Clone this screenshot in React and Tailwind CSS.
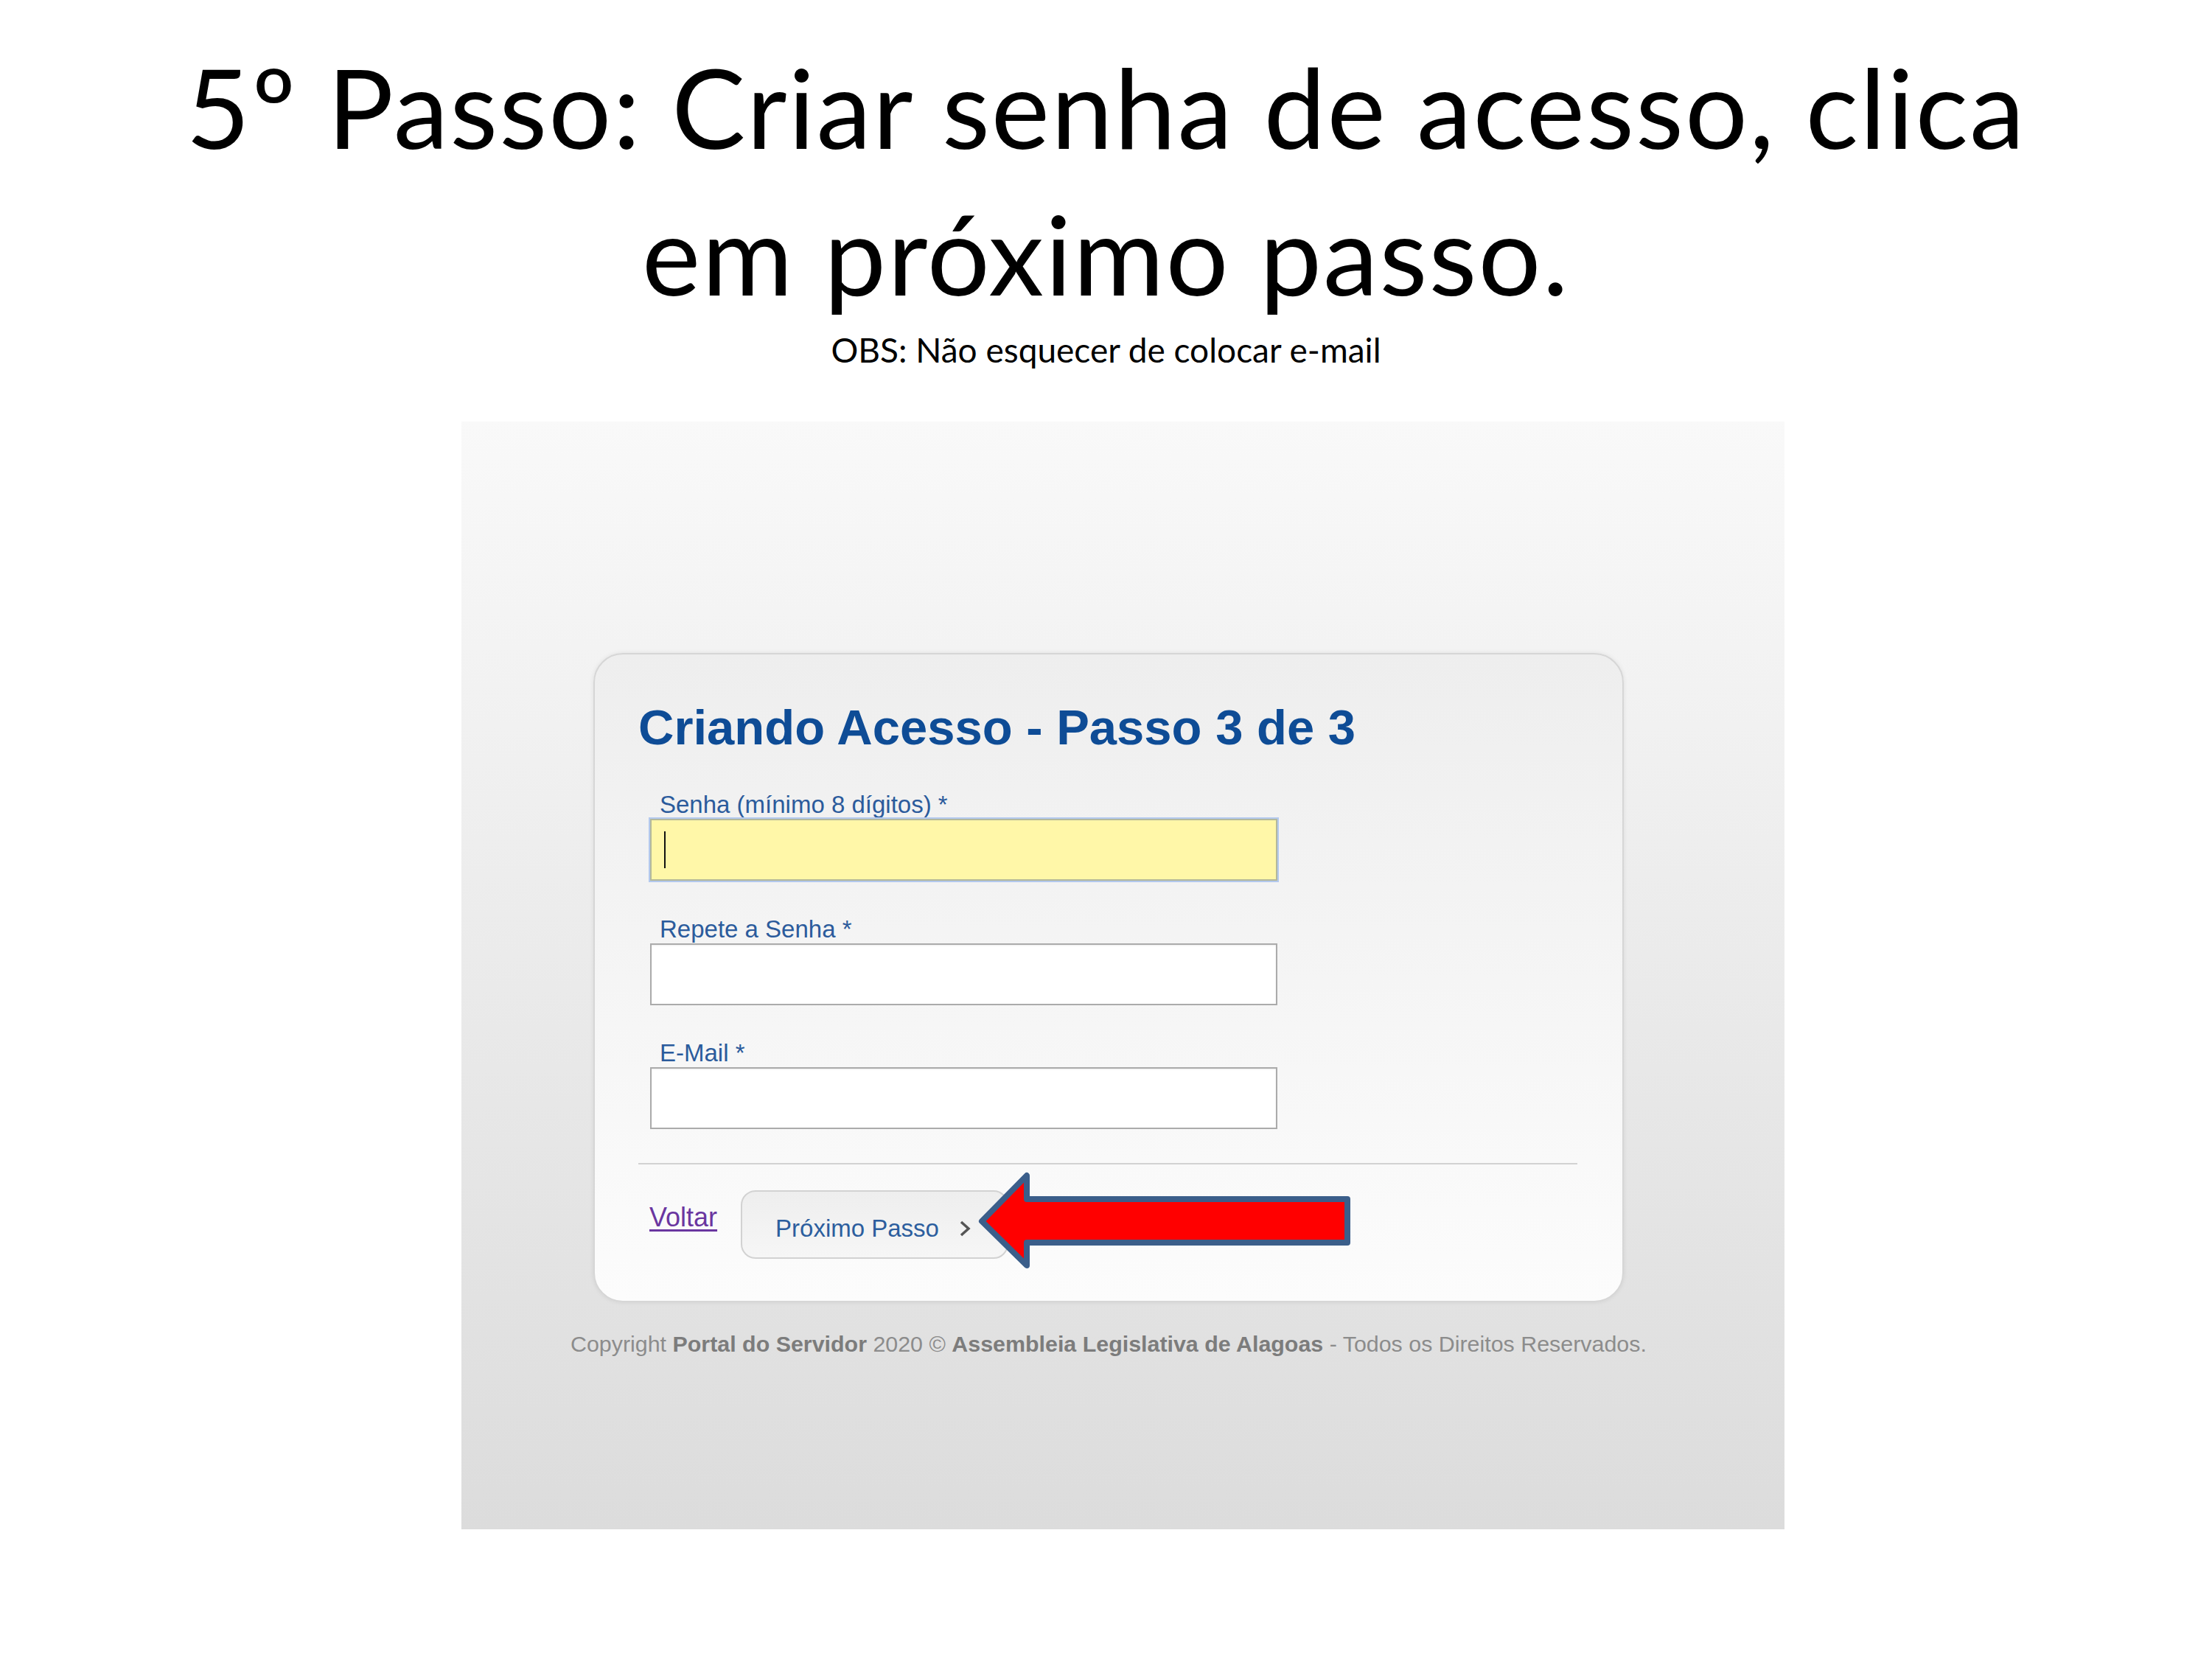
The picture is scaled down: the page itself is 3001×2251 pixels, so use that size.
import React from 'react';

function Field({ label, focused, className }) {
  return (
    <div className={className}>
      <p className="ml-[29px] text-[33px] leading-[33px] text-[#2b5b9c]">{label}</p>
      {focused ? (
        <div className="relative mt-[3px] ml-[16px] w-[851px] h-[84px] bg-[#fff7a8] border-2 border-[#b4b89a] shadow-[0_0_0_2px_#b3c9ee]">
          <div className="absolute left-[17px] top-[15px] w-[2px] h-[50px] bg-[#111]" />
        </div>
      ) : (
        <div className="mt-[3px] ml-[16px] w-[851px] h-[84px] bg-white border-2 border-[#ababab] shadow-[inset_0_1px_2px_rgba(0,0,0,0.08)]" />
      )}
    </div>
  );
}

function App() {
  return (
    <div className="w-[3001px] h-[2251px] bg-white overflow-hidden">
      {/* slide heading */}
      <div className="pt-[45px] text-center font-['Lato',sans-serif] text-[150px] leading-[199px] tracking-[2px] text-black">
        <p>5º Passo: Criar senha de acesso, clica</p>
        <p>em próximo passo.</p>
      </div>
      <p className="mt-[7px] text-center font-['Lato',sans-serif] text-[46px] leading-[50px] text-black">
        OBS: Não esquecer de colocar e-mail
      </p>

      {/* print screen of the portal */}
      <div className="mt-[72px] ml-[626px] w-[1795px] h-[1503px] pt-[314px] pl-[179px] bg-linear-to-b from-[#f9f9f9] to-[#dcdcdc] font-['Liberation_Sans',Arial,sans-serif]">
        <div className="relative w-[1398px] h-[881px] pt-[65px] pl-[59px] rounded-[40px] border-2 border-[#d6d6d6] bg-linear-to-b from-[#eeeeee] to-[#fcfcfc] shadow-[0_0_6px_rgba(0,0,0,0.08)]">
          <h1 className="text-[67px] leading-[67px] font-bold text-[#0e4c96]">Criando Acesso - Passo 3 de 3</h1>

          <Field className="mt-[55px]" label="Senha (mínimo 8 dígitos) *" focused />
          <Field className="mt-[49px]" label="Repete a Senha *" />
          <Field className="mt-[48px]" label="E-Mail *" />

          <div className="mt-[46px] w-[1274px] h-[2px] bg-[#d2d2d2]" />

          <div className="mt-[35px] flex items-start">
            <a className="ml-[15px] mt-[19px] text-[36px] leading-[36px] text-[#6a36a0] underline decoration-[3px] underline-offset-[4px]">Voltar</a>
            <button className="ml-[32px] w-[363px] h-[93px] flex items-start pt-[33px] pl-[45px] rounded-[20px] border-2 border-[#d2d2d2] bg-linear-to-b from-[#eeeeee] to-[#f6f6f6]">
              <span className="text-[33px] leading-[33px] text-[#2c5e9e]">Próximo Passo</span>
              <svg className="ml-[27px] mt-[5px]" width="16" height="24" viewBox="0 0 16 24">
                <path d="M3 3 L13 12 L3 21" fill="none" stroke="#555" strokeWidth="3.5" />
              </svg>
            </button>
          </div>

          {/* red pointer arrow */}
          <svg className="absolute left-[515px] top-[697px]" width="516" height="142" viewBox="0 0 516 142">
            <path
              d="M10 72 L71 10 L71 42 L506 42 L506 101 L71 101 L71 132 Z"
              fill="#ff0000"
              stroke="#3b5e8a"
              strokeWidth="8"
              strokeLinejoin="round"
            />
          </svg>
        </div>

        <p className="mt-[41px] -ml-[31px] text-[30.4px] leading-[30px] text-[#8c8c8c]">
          Copyright <b className="text-[#7c7c7c]">Portal do Servidor</b> 2020 © <b className="text-[#7c7c7c]">Assembleia Legislativa de Alagoas</b> - Todos os Direitos Reservados.
        </p>
      </div>
    </div>
  );
}

export default App;
